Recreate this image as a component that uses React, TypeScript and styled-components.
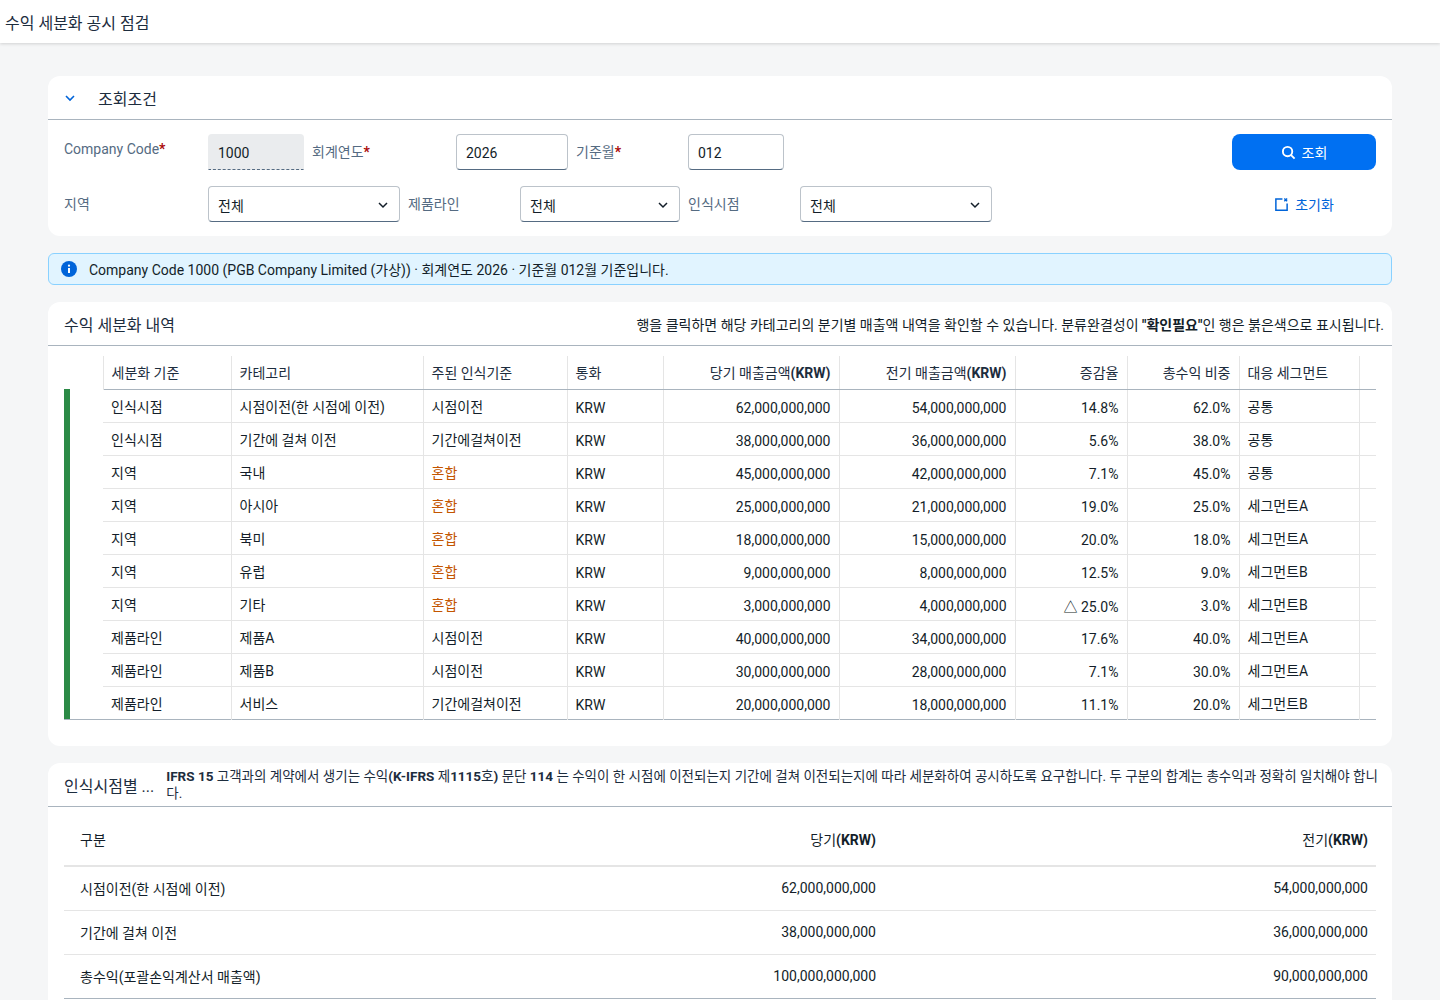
import React from 'react';
import styled, { createGlobalStyle } from 'styled-components';

const Global = createGlobalStyle`
  html, body { margin: 0; padding: 0; background: #f5f6f7; }
  body { font-family: Roboto, "Noto Sans CJK KR", sans-serif; color: #1d2d3e; font-size: 14px; }
  * { box-sizing: border-box; }
`;

const TopBar = styled.div`
  height: 43px;
  background: #fff;
  box-shadow: 0 1px 3px rgba(0,0,0,0.15);
  display: flex;
  align-items: center;
  padding-left: 5px;
  font-size: 16px;
`;

const Content = styled.div`
  padding: 33px 48px 0;
  display: flex;
  flex-direction: column;
  gap: 17px;
`;

const Card = styled.div`
  background: #fff;
  border-radius: 12px;
  overflow: hidden;
`;

const CardHead = styled.div`
  height: 44px;
  border-bottom: 1px solid #a9b4be;
  display: flex;
  align-items: center;
  padding: 0 8px 0 16px;
  gap: 14px;
  font-size: 16px;
`;

const FilterBody = styled.div`
  display: flex;
  justify-content: space-between;
  padding: 14px 16px 14px;
`;

const FormRows = styled.div`
  display: flex;
  flex-direction: column;
  gap: 16px;
`;

const FormRow = styled.div`
  display: flex;
  align-items: flex-start;
`;

const Label = styled.div<{ $w: number }>`
  width: ${p => p.$w}px;
  color: #556b82;
  font-size: 14px;
  padding-top: 7px;
  span { color: #aa0808; font-weight: bold; }
`;

const Input = styled.div<{ $w: number; $ro?: boolean }>`
  width: ${p => p.$w}px;
  height: 36px;
  margin-right: 8px;
  border: 1px solid ${p => (p.$ro ? 'transparent' : '#bcc3ca')};
  border-bottom: 1px ${p => (p.$ro ? 'dashed' : 'solid')} #556b82;
  background: ${p => (p.$ro ? '#eaecee' : '#fff')};
  border-radius: ${p => (p.$ro ? '4px 4px 0 0' : '4px')};
  display: flex;
  align-items: center;
  justify-content: space-between;
  padding: 2px 10px 0 9px;
  font-size: 14px;
  color: #131e29;
`;

const Actions = styled.div`
  width: 144px;
  display: flex;
  flex-direction: column;
  align-items: center;
  gap: 24px;
`;

const SearchBtn = styled.button`
  width: 144px;
  height: 36px;
  border: none;
  border-radius: 8px;
  background: #0070f2;
  color: #fff;
  font: inherit;
  font-size: 14px;
  display: flex;
  align-items: center;
  justify-content: center;
  gap: 6px;
`;

const LinkBtn = styled.div`
  color: #0064d9;
  display: flex;
  align-items: center;
  gap: 6px;
`;

const Info = styled.div`
  height: 32px;
  background: #e1f4ff;
  border: 1px solid #89d1ff;
  border-radius: 6px;
  display: flex;
  align-items: center;
  gap: 12px;
  padding-left: 12px;
  font-size: 14px;
  color: #131e29;
`;

const HeadNote = styled.div`
  margin-left: auto;
  font-size: 14px;
  color: #131e29;
`;

const TableWrap = styled.div`
  padding: 10px 16px 26px;
`;

const Grid = styled.table`
  border-collapse: collapse;
  width: 1312px;
  table-layout: fixed;
  font-size: 14px;
  border-bottom: 1px solid #a9b4be;
  th {
    height: 33px;
    font-weight: normal;
    color: #1d2d3e;
    text-align: left;
    padding: 0 8px;
    border-right: 1px solid #e5e5e5;
    border-bottom: 1px solid #a9b4be;
  }
  td {
    height: 33px;
    padding: 0 8px;
    border-right: 1px solid #e5e5e5;
    border-bottom: 1px solid #e5e5e5;
    color: #131e29;
    white-space: nowrap;
  }
  tr:last-child td { border-bottom: none; }
  .r { text-align: right; }
  .n { padding-top: 4px; }
`;

const Stripe = styled.td`
  && { padding: 0; border-right: none; border-bottom: none; }
  div { width: 6px; height: 33px; background: #2b8a46; }
`;

const Mixed = styled.span`
  color: #c35500;
`;

const HeadTitle = styled.div`
  white-space: nowrap;
  font-size: 16px;
`;

const Desc = styled.div`
  font-size: 13.5px;
  line-height: 17px;
  color: #1d2d3e;
  b { font-weight: 700; }
`;

const SumTable = styled.table`
  border-collapse: collapse;
  width: 1312px;
  table-layout: fixed;
  margin: 6px 16px 0;
  font-size: 14px;
  th, td { height: 44px; padding: 0 8px 0 16px; border-bottom: 1px solid #e5e5e5; color: #131e29; }
  th { height: 53px; font-weight: normal; text-align: left; border-bottom: 2px solid #e5e5e5; }
  .r { text-align: right; }
  tr:last-child td { border-bottom: 1px solid #a9b4be; }
`;

const Chevron = () => (
  <svg width="12" height="12" viewBox="0 0 12 12"><path d="M2 4l4 4 4-4" stroke="#131e29" strokeWidth="1.5" fill="none" /></svg>
);

const rows = [
  ['인식시점', '시점이전(한 시점에 이전)', '시점이전', '62,000,000,000', '54,000,000,000', '14.8%', '62.0%', '공통'],
  ['인식시점', '기간에 걸쳐 이전', '기간에걸쳐이전', '38,000,000,000', '36,000,000,000', '5.6%', '38.0%', '공통'],
  ['지역', '국내', '혼합', '45,000,000,000', '42,000,000,000', '7.1%', '45.0%', '공통'],
  ['지역', '아시아', '혼합', '25,000,000,000', '21,000,000,000', '19.0%', '25.0%', '세그먼트A'],
  ['지역', '북미', '혼합', '18,000,000,000', '15,000,000,000', '20.0%', '18.0%', '세그먼트A'],
  ['지역', '유럽', '혼합', '9,000,000,000', '8,000,000,000', '12.5%', '9.0%', '세그먼트B'],
  ['지역', '기타', '혼합', '3,000,000,000', '4,000,000,000', '△ 25.0%', '3.0%', '세그먼트B'],
  ['제품라인', '제품A', '시점이전', '40,000,000,000', '34,000,000,000', '17.6%', '40.0%', '세그먼트A'],
  ['제품라인', '제품B', '시점이전', '30,000,000,000', '28,000,000,000', '7.1%', '30.0%', '세그먼트A'],
  ['제품라인', '서비스', '기간에걸쳐이전', '20,000,000,000', '18,000,000,000', '11.1%', '20.0%', '세그먼트B'],
];

export default function App() {
  return (
    <>
      <Global />
      <TopBar>수익 세분화 공시 점검</TopBar>
      <Content>
        <Card>
          <CardHead>
            <svg width="12" height="12" viewBox="0 0 12 12"><path d="M2 4l4 4 4-4" stroke="#0064d9" strokeWidth="1.6" fill="none" /></svg>
            <span style={{ marginLeft: 8 }}>조회조건</span>
          </CardHead>
          <FilterBody>
            <FormRows>
              <FormRow>
                <Label $w={144}>Company Code<span>*</span></Label>
                <Input $w={96} $ro>1000</Input>
                <Label $w={144}>회계연도<span>*</span></Label>
                <Input $w={112}>2026</Input>
                <Label $w={112}>기준월<span>*</span></Label>
                <Input $w={96}>012</Input>
              </FormRow>
              <FormRow>
                <Label $w={144}>지역</Label>
                <Input $w={192}>전체<Chevron /></Input>
                <Label $w={112}>제품라인</Label>
                <Input $w={160}>전체<Chevron /></Input>
                <Label $w={112}>인식시점</Label>
                <Input $w={192}>전체<Chevron /></Input>
              </FormRow>
            </FormRows>
            <Actions>
              <SearchBtn>
                <svg width="15" height="15" viewBox="0 0 16 16"><circle cx="7" cy="7" r="5" stroke="#fff" strokeWidth="2" fill="none" /><path d="M10.5 10.5l4 4" stroke="#fff" strokeWidth="2" /></svg>
                조회
              </SearchBtn>
              <LinkBtn>
                <svg width="15" height="15" viewBox="0 0 16 16"><path d="M9 2H2v12h12V7" stroke="#0064d9" strokeWidth="1.6" fill="none" /><path d="M11 1.5l3 3M14 1.5l-3 3" stroke="#0064d9" strokeWidth="1.5" /></svg>
                초기화
              </LinkBtn>
            </Actions>
          </FilterBody>
        </Card>

        <Info>
          <svg width="16" height="16" viewBox="0 0 16 16"><circle cx="8" cy="8" r="8" fill="#0064d9" /><rect x="7" y="7" width="2" height="5" fill="#fff" /><circle cx="8" cy="4.7" r="1.1" fill="#fff" /></svg>
          Company Code 1000 (PGB Company Limited (가상)) · 회계연도 2026 · 기준월 012월 기준입니다.
        </Info>

        <Card>
          <CardHead>
            수익 세분화 내역
            <HeadNote>행을 클릭하면 해당 카테고리의 분기별 매출액 내역을 확인할 수 있습니다. 분류완결성이 <b>"확인필요"</b>인 행은 붉은색으로 표시됩니다.</HeadNote>
          </CardHead>
          <TableWrap>
            <Grid>
              <colgroup>
                <col style={{ width: 39 }} />
                <col style={{ width: 128 }} />
                <col style={{ width: 192 }} />
                <col style={{ width: 144 }} />
                <col style={{ width: 96 }} />
                <col style={{ width: 176 }} />
                <col style={{ width: 176 }} />
                <col style={{ width: 112 }} />
                <col style={{ width: 112 }} />
                <col style={{ width: 120 }} />
                <col style={{ width: 17 }} />
              </colgroup>
              <thead>
                <tr>
                  <th style={{ borderBottom: 'none' }} />
                  <th>세분화 기준</th>
                  <th>카테고리</th>
                  <th>주된 인식기준</th>
                  <th>통화</th>
                  <th className="r">당기 매출금액<b>(KRW)</b></th>
                  <th className="r">전기 매출금액<b>(KRW)</b></th>
                  <th className="r">증감율</th>
                  <th className="r">총수익 비중</th>
                  <th>대응 세그먼트</th>
                  <th style={{ borderRight: 'none' }} />
                </tr>
              </thead>
              <tbody>
                {rows.map((r, i) => (
                  <tr key={i}>
                    <Stripe><div /></Stripe>
                    <td>{r[0]}</td>
                    <td>{r[1]}</td>
                    <td>{r[2] === '혼합' ? <Mixed>혼합</Mixed> : r[2]}</td>
                    <td className="n">KRW</td>
                    <td className="r n">{r[3]}</td>
                    <td className="r n">{r[4]}</td>
                    <td className="r n">{r[5]}</td>
                    <td className="r n">{r[6]}</td>
                    <td>{r[7]}</td>
                    <td style={{ borderRight: 'none' }} />
                  </tr>
                ))}
              </tbody>
            </Grid>
          </TableWrap>
        </Card>

        <Card>
          <CardHead style={{ gap: 12 }}>
            <HeadTitle>인식시점별 ...</HeadTitle>
            <Desc>
              <b>IFRS 15</b> 고객과의 계약에서 생기는 수익<b>(K-IFRS</b> 제<b>1115</b>호<b>)</b> 문단 <b>114</b> 는 수익이 한 시점에 이전되는지 기간에 걸쳐 이전되는지에 따라 세분화하여 공시하도록 요구합니다. 두 구분의 합계는 총수익과 정확히 일치해야 합니다.
            </Desc>
          </CardHead>
          <SumTable>
            <colgroup>
              <col style={{ width: 500 }} />
              <col style={{ width: 320 }} />
              <col style={{ width: 492 }} />
            </colgroup>
            <thead>
              <tr>
                <th>구분</th>
                <th className="r">당기<b>(KRW)</b></th>
                <th className="r">전기<b>(KRW)</b></th>
              </tr>
            </thead>
            <tbody>
              <tr><td>시점이전(한 시점에 이전)</td><td className="r">62,000,000,000</td><td className="r">54,000,000,000</td></tr>
              <tr><td>기간에 걸쳐 이전</td><td className="r">38,000,000,000</td><td className="r">36,000,000,000</td></tr>
              <tr><td>총수익(포괄손익계산서 매출액)</td><td className="r">100,000,000,000</td><td className="r">90,000,000,000</td></tr>
            </tbody>
          </SumTable>
          <div style={{ height: 20 }} />
        </Card>
      </Content>
    </>
  );
}
